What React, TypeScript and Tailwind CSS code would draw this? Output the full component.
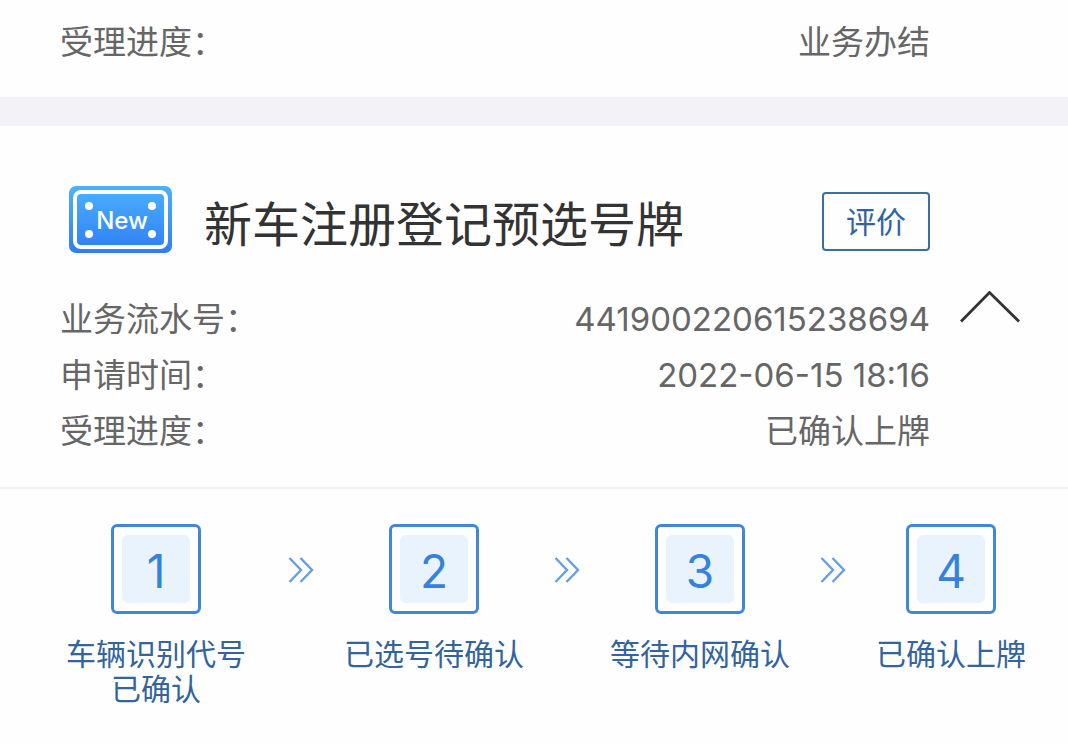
const details = [
  { label: "业务流水号", value: "441900220615238694" },
  { label: "申请时间", value: "2022-06-15 18:16" },
  { label: "受理进度", value: "已确认上牌" },
];

const steps = [
  { id: 1, label: "车辆识别代号已确认", width: "w-[204px]" },
  { id: 2, label: "已选号待确认", width: "w-[180px]" },
  { id: 3, label: "等待内网确认", width: "w-[180px]" },
  { id: 4, label: "已确认上牌", width: "w-[150px]" },
];

function DetailRow({ label, value }: { label: string; value: string }) {
  return (
    <div className="flex h-14 items-center justify-between text-[33px] leading-none text-[#666]">
      <dt>{label}：</dt>
      <dd>{value}</dd>
    </div>
  );
}

function PlateIcon() {
  return (
    <svg viewBox="0 0 103 67" className="h-[67px] w-[103px] shrink-0" aria-hidden="true">
      <defs>
        <linearGradient id="plate" x1="0" y1="0" x2="0" y2="1">
          <stop offset="0" stopColor="#4cb2fb" />
          <stop offset="1" stopColor="#2f7df6" />
        </linearGradient>
      </defs>
      <rect width="103" height="67" rx="7" fill="url(#plate)" />
      <rect x="6" y="6" width="91" height="55" rx="6" fill="none" stroke="#fff" strokeWidth="4" />
      <circle cx="20" cy="20" r="4" fill="#fff" />
      <circle cx="83" cy="20" r="4" fill="#fff" />
      <circle cx="20" cy="48" r="4" fill="#fff" />
      <circle cx="83" cy="48" r="4" fill="#fff" />
      <text x="53" y="43" textAnchor="middle" fill="#fff" fontSize="24" fontWeight="500" fontFamily="Inter, sans-serif">
        New
      </text>
    </svg>
  );
}

function StepArrow() {
  return (
    <li className="flex h-[92px] flex-1 items-center justify-center" aria-hidden="true">
      <svg viewBox="0 0 26 28" fill="none" className="h-7 w-[26px]">
        <path d="M1.5 2l11.5 12L1.5 26M12.5 2L24 14 12.5 26" stroke="#669fe0" strokeWidth="2.4" />
      </svg>
    </li>
  );
}

export default function App() {
  return (
    <main className="min-h-screen bg-[#fefefe] font-[Inter,'Noto_Sans_CJK_SC',sans-serif]">
      <section className="pt-[14px] pr-[138px] pb-[27px] pl-[60px]">
        <dl>
          <DetailRow label="受理进度" value="业务办结" />
        </dl>
      </section>

      <div className="h-[29px] bg-[#f3f2f8]" />

      <section>
        <header className="flex items-center pt-[60px] pr-[138px] pl-[69px]">
          <PlateIcon />
          <h2 className="ml-8 flex-1 pt-[10px] text-[48px] leading-none text-[#333]">新车注册登记预选号牌</h2>
          <button
            type="button"
            className="mt-1 h-[59px] w-[108px] rounded border-2 border-[#3c6ea3] text-[30px] leading-none text-[#2f64a0]"
          >
            评价
          </button>
        </header>

        <div className="mt-[38px] flex items-start pb-7 pl-[60px]">
          <dl className="flex-1">
            {details.map((row) => (
              <DetailRow key={row.label} label={row.label} value={row.value} />
            ))}
          </dl>
          <button type="button" aria-label="收起" aria-expanded="true" className="mr-12 ml-[30px]">
            <svg viewBox="0 0 60 34" fill="none" className="h-[34px] w-[60px]">
              <path d="M1 30.500L29.500 1.500L59 30.500" stroke="#333" strokeWidth="2.8" />
            </svg>
          </button>
        </div>

        <ol className="flex items-start border-t-2 border-[#f0f0f2] pt-[35px] pr-[42px] pb-9 pl-[54px]">
          {steps.map((step, i) => [
            i > 0 && <StepArrow key={`arrow-${step.id}`} />,
            <li key={step.id} className={`flex shrink-0 flex-col items-center ${step.width}`}>
              <div className="size-[90px] rounded-md border-3 border-[#4087d7] p-2">
                <div className="flex size-full items-center justify-center rounded-md bg-[#e9f3fe] pt-1 text-[46px] leading-none text-[#3582dc]">
                  {step.id}
                </div>
              </div>
              <p className="mt-[23px] text-center text-[30px] leading-[35px] text-[#33649b]">{step.label}</p>
            </li>,
          ])}
        </ol>
      </section>
    </main>
  );
}
